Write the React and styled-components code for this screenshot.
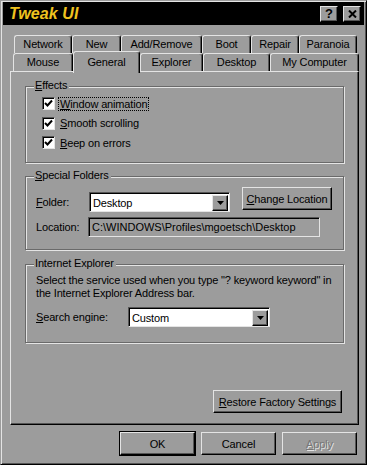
import styled, { createGlobalStyle } from "styled-components";

const face = "#9c9c9c";
const light = "#e4e4e4";
const dark = "#555555";

const Global = createGlobalStyle`
  html, body {
    margin: 0;
    padding: 0;
    background: ${face};
  }
  body {
    font-family: "Liberation Sans", Arial, sans-serif;
    font-size: 11px;
    letter-spacing: -0.15px;
    color: #000;
  }
`;

const Window = styled.div`
  box-sizing: border-box;
  width: 367px;
  height: 465px;
  background: ${face};
  border: 1px solid;
  border-color: ${face} #000 #000 ${face};
  box-shadow: inset 1px 1px ${light}, inset -1px -1px ${dark};
  padding: 2px;
  display: flex;
  flex-direction: column;
`;

const TitleBar = styled.div`
  height: 23px;
  background: #000;
  display: flex;
  align-items: center;
  padding: 0 3px 0 6px;
  margin-top: -1px;
`;

const TitleText = styled.div`
  flex: 1;
  color: #efc21f;
  font-weight: bold;
  font-style: italic;
  font-size: 16px;
  letter-spacing: 0.1px;
`;

const TitleButton = styled.div`
  box-sizing: border-box;
  width: 18px;
  height: 16px;
  margin-left: ${(p) => (p.$gap ? "5px" : "0")};
  background: ${face};
  border: 1px solid;
  border-color: ${light} #000 #000 ${light};
  box-shadow: inset -1px -1px ${dark};
  display: flex;
  align-items: center;
  justify-content: center;
  font-weight: bold;
  font-size: 13px;
  line-height: 1;
`;

const Content = styled.div`
  flex: 1;
  display: flex;
  flex-direction: column;
  padding: 10px 5px 0 5px;
`;

const TabRow = styled.div`
  display: flex;
  height: 18px;
  margin-left: ${(p) => p.$offset}px;
  position: relative;
  z-index: ${(p) => (p.$front ? 2 : 0)};
`;

const Tab = styled.div`
  box-sizing: border-box;
  width: ${(p) => p.$w}px;
  height: ${(p) => (p.$active ? 22 : 18)}px;
  margin-top: ${(p) => (p.$active ? -2 : 0)}px;
  background: ${face};
  border-top: 1px solid ${light};
  border-left: 1px solid ${light};
  border-right: 1px solid #000;
  border-radius: 3px 3px 0 0;
  box-shadow: inset -1px 0 ${dark};
  display: flex;
  justify-content: center;
  padding-top: ${(p) => (p.$active ? 4 : 2)}px;
  white-space: nowrap;
`;

const Panel = styled.div`
  box-sizing: border-box;
  width: 349px;
  height: 354px;
  margin-left: 2px;
  border: 1px solid;
  border-color: ${light} #000 #000 ${light};
  box-shadow: inset -1px -1px ${dark};
  padding: 14px 13px 11px 14px;
  display: flex;
  flex-direction: column;
  position: relative;
  z-index: 1;
`;

const Group = styled.div`
  box-sizing: border-box;
  position: relative;
  width: 319px;
  height: ${(p) => p.$h}px;
  margin-top: ${(p) => p.$mt || 0}px;
  border: 1px solid #6a6a6a;
  box-shadow: inset 1px 1px ${light}, 1px 1px ${light};
  padding: ${(p) => p.$pt}px 10px 0 10px;
`;

const Legend = styled.div`
  position: absolute;
  top: -8px;
  left: 8px;
  padding: 0 2px 0 1px;
  background: ${face};
`;

const Key = styled.span`
  text-decoration: underline;
`;

const CheckRow = styled.div`
  display: flex;
  align-items: center;
  height: 19.5px;
  padding-left: 6px;
`;

const Box = styled.div`
  box-sizing: border-box;
  width: 13px;
  height: 13px;
  background: #fff;
  border: 1px solid;
  border-color: ${dark} ${light} ${light} ${dark};
  box-shadow: inset 1px 1px #000;
  display: flex;
  align-items: center;
  justify-content: center;
  margin-right: 3px;
`;

const CheckLabel = styled.span`
  padding: 0 1px;
  border: 1px ${(p) => (p.$focus ? "dotted #000" : "solid transparent")};
`;

const FieldRow = styled.div`
  display: flex;
  align-items: flex-start;
  margin-top: ${(p) => p.$mt || 0}px;
`;

const Label = styled.div`
  width: ${(p) => p.$w}px;
  margin-top: ${(p) => p.$mt || 0}px;
  line-height: 20px;
  white-space: nowrap;
`;

const Combo = styled.div`
  box-sizing: border-box;
  width: ${(p) => p.$w}px;
  height: 20px;
  margin-top: ${(p) => p.$mt || 0}px;
  background: #fff;
  border: 1px solid;
  border-color: ${dark} ${light} ${light} ${dark};
  box-shadow: inset 1px 1px #000;
  display: flex;
  align-items: center;
  padding: 1px 1px 0 3px;
`;

const ComboText = styled.div`
  flex: 1;
`;

const ArrowButton = styled.div`
  box-sizing: border-box;
  width: 16px;
  height: 16px;
  background: ${face};
  border: 1px solid;
  border-color: ${light} #000 #000 ${light};
  box-shadow: inset -1px -1px ${dark};
  display: flex;
  align-items: center;
  justify-content: center;
`;

const ReadOnly = styled.div`
  box-sizing: border-box;
  width: 232px;
  height: 20px;
  border: 1px solid;
  border-color: ${dark} ${light} ${light} ${dark};
  box-shadow: inset 1px 1px #000;
  padding: 3px 0 0 3px;
  letter-spacing: 0;
  white-space: nowrap;
  overflow: hidden;
`;

const Button = styled.div`
  box-sizing: border-box;
  width: ${(p) => p.$w}px;
  height: 23px;
  margin-left: ${(p) => p.$ml || 0}px;
  margin-right: ${(p) => p.$mr || 0}px;
  background: ${face};
  border: 1px solid;
  border-color: ${light} #000 #000 ${light};
  box-shadow: ${(p) =>
    p.$default
      ? `inset -1px -1px ${dark}, 0 0 0 1px #000`
      : `inset -1px -1px ${dark}`};
  display: flex;
  align-items: center;
  justify-content: center;
  white-space: nowrap;
  color: ${(p) => (p.$disabled ? "#777" : "#000")};
  text-shadow: ${(p) => (p.$disabled ? `1px 1px ${light}` : "none")};
`;

const Para = styled.div`
  line-height: 13px;
  white-space: nowrap;
`;

const BottomRow = styled.div`
  display: flex;
  justify-content: flex-end;
  margin-top: auto;
`;

const ActionRow = styled.div`
  display: flex;
  justify-content: flex-end;
  padding: 7px 2px 0 0;
  gap: 6px;
`;

const Arrow = () => (
  <svg width="7" height="4" viewBox="0 0 7 4">
    <path d="M0 0h7L3.5 4z" fill="#000" />
  </svg>
);

const Check = () => (
  <svg width="9" height="9" viewBox="0 0 9 9">
    <path d="M1 4l2.5 2.5L8 1.5" stroke="#000" strokeWidth="2" fill="none" />
  </svg>
);

const tabsBack = [
  ["Network", 58],
  ["New", 49],
  ["Add/Remove", 81],
  ["Boot", 49],
  ["Repair", 48],
  ["Paranoia", 58],
];

const tabsFront = [
  ["Mouse", 60],
  ["General", 67],
  ["Explorer", 63],
  ["Desktop", 67],
  ["My Computer", 89],
];

const effects = [
  ["W", "indow animation", true],
  ["S", "mooth scrolling", false],
  ["B", "eep on errors", false],
];

export default function App() {
  return (
    <>
      <Global />
      <Window>
        <TitleBar>
          <TitleText>Tweak UI</TitleText>
          <TitleButton>?</TitleButton>
          <TitleButton $gap>
            <svg width="9" height="8" viewBox="0 0 9 8">
              <path d="M1 0.5l7 7M8 0.5l-7 7" stroke="#000" strokeWidth="2" />
            </svg>
          </TitleButton>
        </TitleBar>
        <Content>
          <TabRow $offset={6}>
            {tabsBack.map(([name, w]) => (
              <Tab key={name} $w={w}>
                {name}
              </Tab>
            ))}
          </TabRow>
          <TabRow $offset={5} $front>
            {tabsFront.map(([name, w]) => (
              <Tab key={name} $w={w} $active={name === "General"}>
                {name}
              </Tab>
            ))}
          </TabRow>
          <Panel>
            <Group $h={77} $pt={7}>
              <Legend>
                <Key>E</Key>ffects
              </Legend>
              {effects.map(([k, rest, focus]) => (
                <CheckRow key={k}>
                  <Box>
                    <Check />
                  </Box>
                  <CheckLabel $focus={focus}>
                    <Key>{k}</Key>
                    {rest}
                  </CheckLabel>
                </CheckRow>
              ))}
            </Group>

            <Group $h={74} $mt={13} $pt={10}>
              <Legend>
                <Key>S</Key>pecial Folders
              </Legend>
              <FieldRow>
                <Label $w={53} $mt={5}>
                  <Key>F</Key>older:
                </Label>
                <Combo $w={141} $mt={5}>
                  <ComboText>Desktop</ComboText>
                  <ArrowButton>
                    <Arrow />
                  </ArrowButton>
                </Combo>
                <Button $w={90} $ml={12}>
                  <Key>C</Key>hange Location
                </Button>
              </FieldRow>
              <FieldRow $mt={5}>
                <Label $w={52}>Location:</Label>
                <ReadOnly>C:\WINDOWS\Profiles\mgoetsch\Desktop</ReadOnly>
              </FieldRow>
            </Group>

            <Group $h={79} $mt={14} $pt={9}>
              <Legend>Internet Explorer</Legend>
              <Para>
                Select the service used when you type "? keyword keyword" in
                <br />
                the Internet Explorer Address bar.
              </Para>
              <FieldRow $mt={7}>
                <Label $w={92}>
                  <Key>S</Key>earch engine:
                </Label>
                <Combo $w={142}>
                  <ComboText>Custom</ComboText>
                  <ArrowButton>
                    <Arrow />
                  </ArrowButton>
                </Combo>
              </FieldRow>
            </Group>

            <BottomRow>
              <Button $w={129} $mr={3}>
                <Key>R</Key>estore Factory Settings
              </Button>
            </BottomRow>
          </Panel>
          <ActionRow>
            <Button $w={75} $default>
              OK
            </Button>
            <Button $w={75}>Cancel</Button>
            <Button $w={75} $disabled>
              <Key>A</Key>pply
            </Button>
          </ActionRow>
        </Content>
      </Window>
    </>
  );
}
